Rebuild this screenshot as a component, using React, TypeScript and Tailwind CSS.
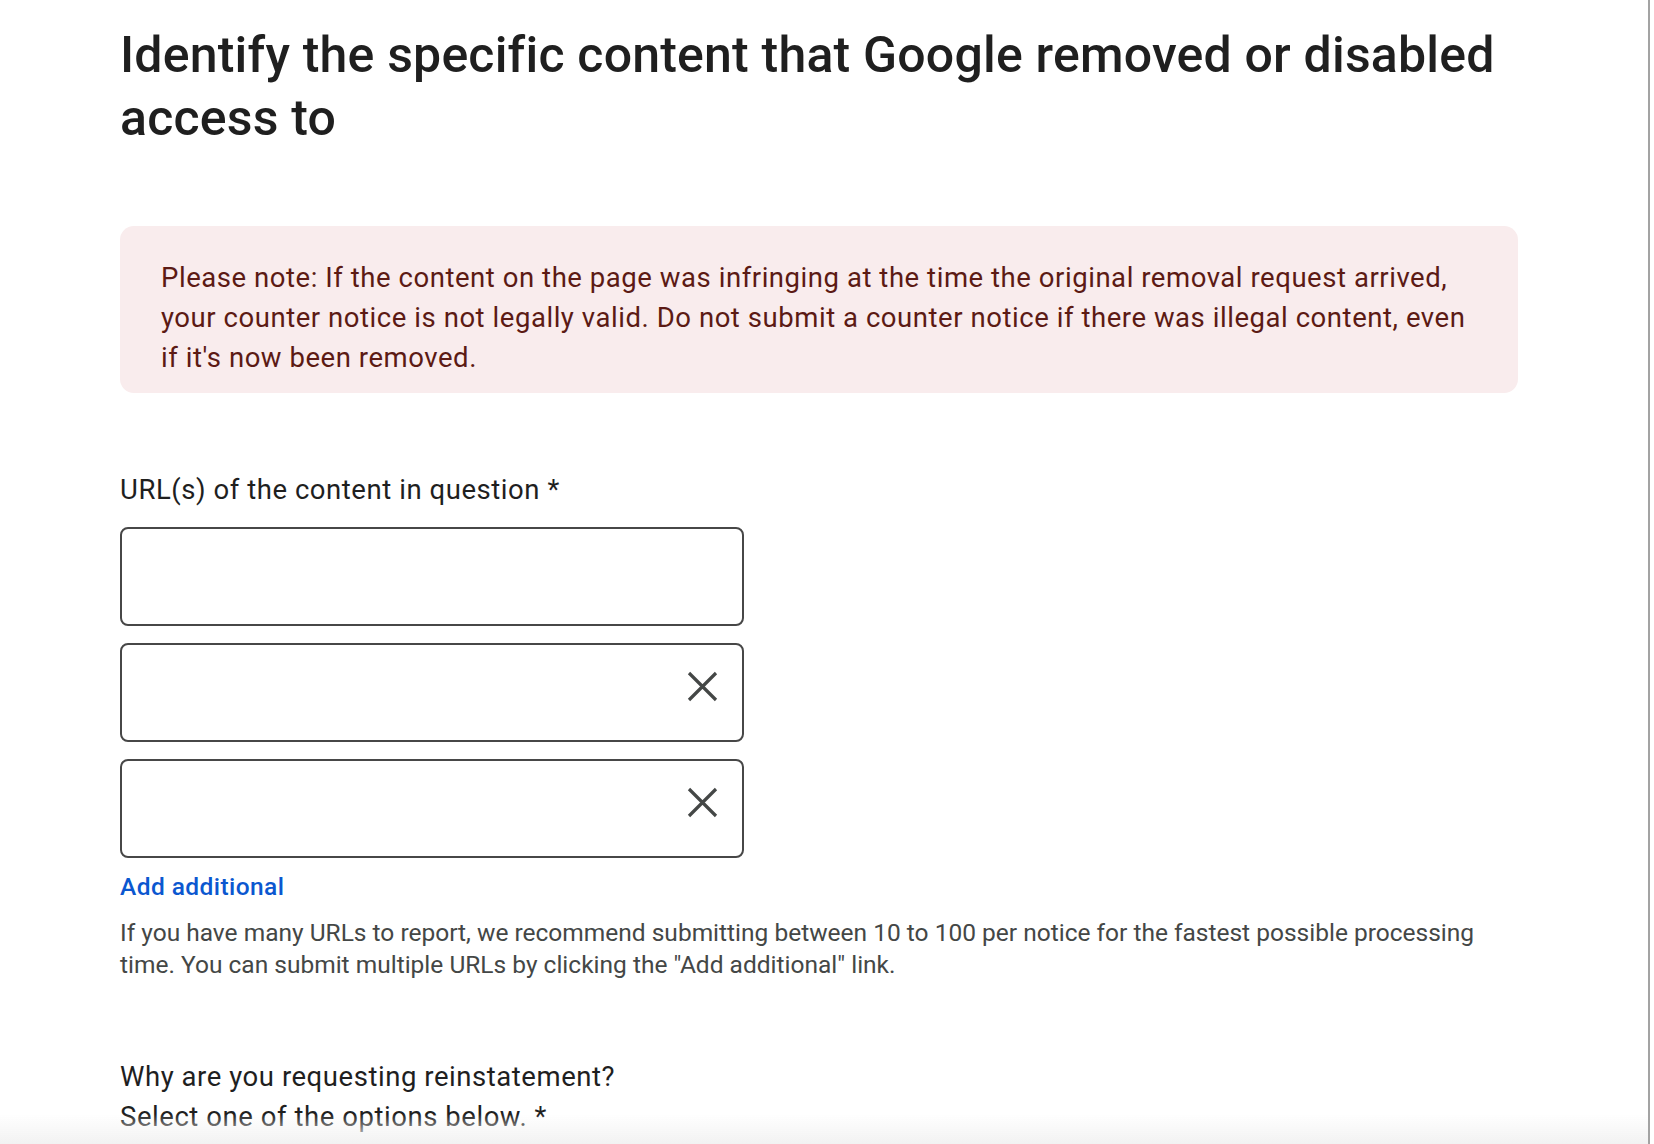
const CloseIcon = () => (
  <svg width="31" height="31" viewBox="0 0 31 31" className="text-[#444746]">
    <path d="M2 2L29 29M29 2L2 29" stroke="currentColor" strokeWidth="3.2" fill="none" />
  </svg>
);

const UrlInput = ({ removable }: { removable?: boolean }) => (
  <div className="w-[624px] h-[99px] border-2 border-[#474747] rounded-[8px] flex items-center justify-end pr-[24px]">
    {removable && (
      <div className="mb-[13px]">
        <CloseIcon />
      </div>
    )}
  </div>
);

export default function App() {
  return (
    <div className="min-h-screen bg-white flex font-['Roboto',sans-serif]">
      <main className="flex-1 pl-[120px] pr-[130px] pt-[24px] pb-[10px]">
        <h1 className="text-[50px] leading-[63px] tracking-[0.2px] font-medium text-[#1f1f1f]">
          Identify the specific content that Google removed or disabled access to
        </h1>

        <div className="mt-[76px] rounded-[14px] bg-[#f9eced] pl-[41px] pr-[40px] pt-[32px] pb-[15px] text-[27.5px] leading-[40px] tracking-[0.55px] text-[#5c1a14]">
          Please note: If the content on the page was infringing at the time the original removal request arrived,
          your counter notice is not legally valid. Do not submit a counter notice if there was illegal content,
          even if it's now been removed.
        </div>

        <div className="mt-[77px] text-[27.5px] leading-[40px] tracking-[0.55px] text-[#1f1f1f]">
          URL(s) of the content in question *
        </div>

        <div className="mt-[17px] flex flex-col gap-[17px]">
          <UrlInput />
          <UrlInput removable />
          <UrlInput removable />
        </div>

        <div className="mt-[13px] text-[24.5px] leading-[32px] tracking-[0.43px] font-medium text-[#0b57d0]">
          Add additional
        </div>

        <p className="mt-[14px] text-[24.5px] leading-[32px] text-[#444746]">
          If you have many URLs to report, we recommend submitting between 10 to 100 per notice for the fastest
          possible processing time. You can submit multiple URLs by clicking the "Add additional" link.
        </p>

        <div className="mt-[76px] text-[27.5px] leading-[40px] tracking-[0.55px] text-[#1f1f1f]">
          <p>Why are you requesting reinstatement?</p>
          <p>Select one of the options below. *</p>
        </div>
      </main>
      <div className="w-[2px] bg-[#a3a3a3] mr-[4px]" />
      <div className="pointer-events-none fixed bottom-0 left-0 right-[6px] h-[30px] bg-linear-to-b from-white/0 to-[#f2f2f2]" />
    </div>
  );
}
